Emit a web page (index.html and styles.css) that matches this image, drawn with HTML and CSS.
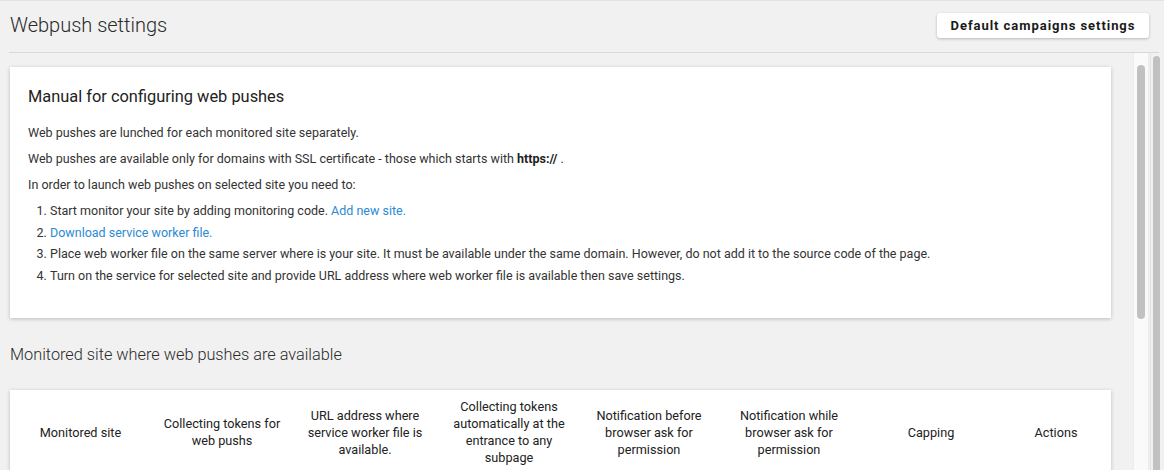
FILE: index.html
```html
<!DOCTYPE html>
<html lang="en">
<head>
  <meta charset="UTF-8">
  <title>Webpush settings</title>
  <link rel="stylesheet" href="styles.css">
</head>
<body>

<!-- HEADER -->
<div class="page-head">
  <h1>Webpush settings</h1>
  <button class="btn-default">Default campaigns settings</button>
</div>

<div class="workspace">
  <div class="content">

    <!-- MANUAL -->
    <div class="card manual">
      <h2>Manual for configuring web pushes</h2>
      <p>Web pushes are lunched for each monitored site separately.</p>
      <p>Web pushes are available only for domains with SSL certificate - those which starts with <b>https://</b> .</p>
      <p>In order to launch web pushes on selected site you need to:</p>
      <ol>
        <li>Start monitor your site by adding monitoring code. <a href="#">Add new site.</a></li>
        <li><a href="#">Download service worker file.</a></li>
        <li>Place web worker file on the same server where is your site. It must be available under the same domain. However, do not add it to the source code of the page.</li>
        <li>Turn on the service for selected site and provide URL address where web worker file is available then save settings.</li>
      </ol>
    </div>

    <h3 class="section-title">Monitored site where web pushes are available</h3>

    <!-- SITES TABLE -->
    <div class="card sites">
      <table>
        <thead>
          <tr>
            <th class="c1">Monitored site</th>
            <th class="c2">Collecting tokens for web pushs</th>
            <th class="c3">URL address where service worker file is available.</th>
            <th class="c4">Collecting tokens automatically at the entrance to any subpage</th>
            <th class="c5">Notification before browser ask for permission</th>
            <th class="c6">Notification while browser ask for permission</th>
            <th class="c7">Capping</th>
            <th class="c8">Actions</th>
          </tr>
        </thead>
      </table>
    </div>

  </div>

  <div class="scroll-inner"><div class="thumb"></div></div>
  <div class="scroll-outer"><div class="thumb"></div></div>
</div>

</body>
</html>
```

FILE: styles.css
```css
* { margin: 0; padding: 0; box-sizing: border-box; }

body {
  font-family: Roboto, 'Liberation Sans', sans-serif;
  background-color: #f1f1f1;
  color: #333;
  border-top: 1px solid #e3e3e3;
  height: 470px;
  overflow: hidden;
}

.page-head {
  display: flex;
  justify-content: space-between;
  align-items: flex-start;
  height: 52px;
  margin: 0 5px 0 9px;
  padding: 0 10px 0 1px;
  border-bottom: 1px solid #d8d8d8;
}

h1 {
  font-size: 20px;
  font-weight: 300;
  color: #2a2a2a;
  line-height: 24px;
  margin-top: 12px;
}

.btn-default {
  margin-top: 12px;
  height: 25px;
  width: 212px;
  background: #fff;
  border: none;
  border-radius: 3px;
  box-shadow: 0 1px 3px rgba(0,0,0,0.25);
  font-family: Roboto, 'Liberation Sans', sans-serif;
  font-size: 13px;
  font-weight: 700;
  letter-spacing: 0.95px;
  color: #1a1a1a;
  cursor: pointer;
}

.workspace {
  display: flex;
  height: 417px;
}

.content {
  flex: 1;
  padding: 14px 22px 0 10px;
  overflow: hidden;
}

.card {
  background: #fff;
  box-shadow: 0 1px 4px rgba(0,0,0,0.22);
}

.manual {
  height: 251px;
  padding: 20px 18px;
}

.manual h2 {
  font-size: 16.4px;
  font-weight: 400;
  color: #222;
  line-height: 20px;
  margin-bottom: 17px;
}

.manual p {
  font-size: 12.5px;
  line-height: 18px;
  margin-bottom: 8px;
  color: #333;
}

.manual p b { font-weight: 700; color: #222; }

.manual ol {
  padding-left: 22px;
  font-size: 12.5px;
  color: #333;
}

.manual li {
  line-height: 18px;
  margin-bottom: 3.6px;
}

.manual a {
  color: #2b8ad5;
  text-decoration: none;
}

.section-title {
  font-size: 16.3px;
  font-weight: 300;
  color: #2a2a2a;
  line-height: 20px;
  margin: 27px 0 25px;
}

.sites { height: 120px; }

table {
  border-collapse: collapse;
  width: 100%;
  table-layout: fixed;
}

th {
  font-size: 12.7px;
  font-weight: 400;
  color: #222;
  line-height: 17px;
  text-align: center;
  vertical-align: middle;
  padding: 8px 7px 10px;
}

.c1 { width: 141px; }
.c2 { width: 142px; }
.c3 { width: 144px; }
.c4 { width: 144px; }
.c5 { width: 136px; }
.c6 { width: 144px; }
.c7 { width: 140px; }
.c8 { width: 110px; }

.scroll-inner {
  width: 16px;
  background: #fafafa;
  border-left: 1px solid #ececec;
  border-right: 1px solid #ececec;
  padding: 12px 0 0 3px;
}

.scroll-inner .thumb {
  width: 8px;
  height: 254px;
  background: #c1c1c1;
  border-radius: 4px;
}

.scroll-outer {
  width: 14px;
  margin-left: 1px;
  margin-top: -1px;
  border-left: 1px solid #e2e2e2;
  padding: 4px 0 0 2px;
}

.scroll-outer .thumb {
  width: 7px;
  height: 100%;
  background: #c1c1c1;
  border-radius: 4px 4px 0 0;
}
```
